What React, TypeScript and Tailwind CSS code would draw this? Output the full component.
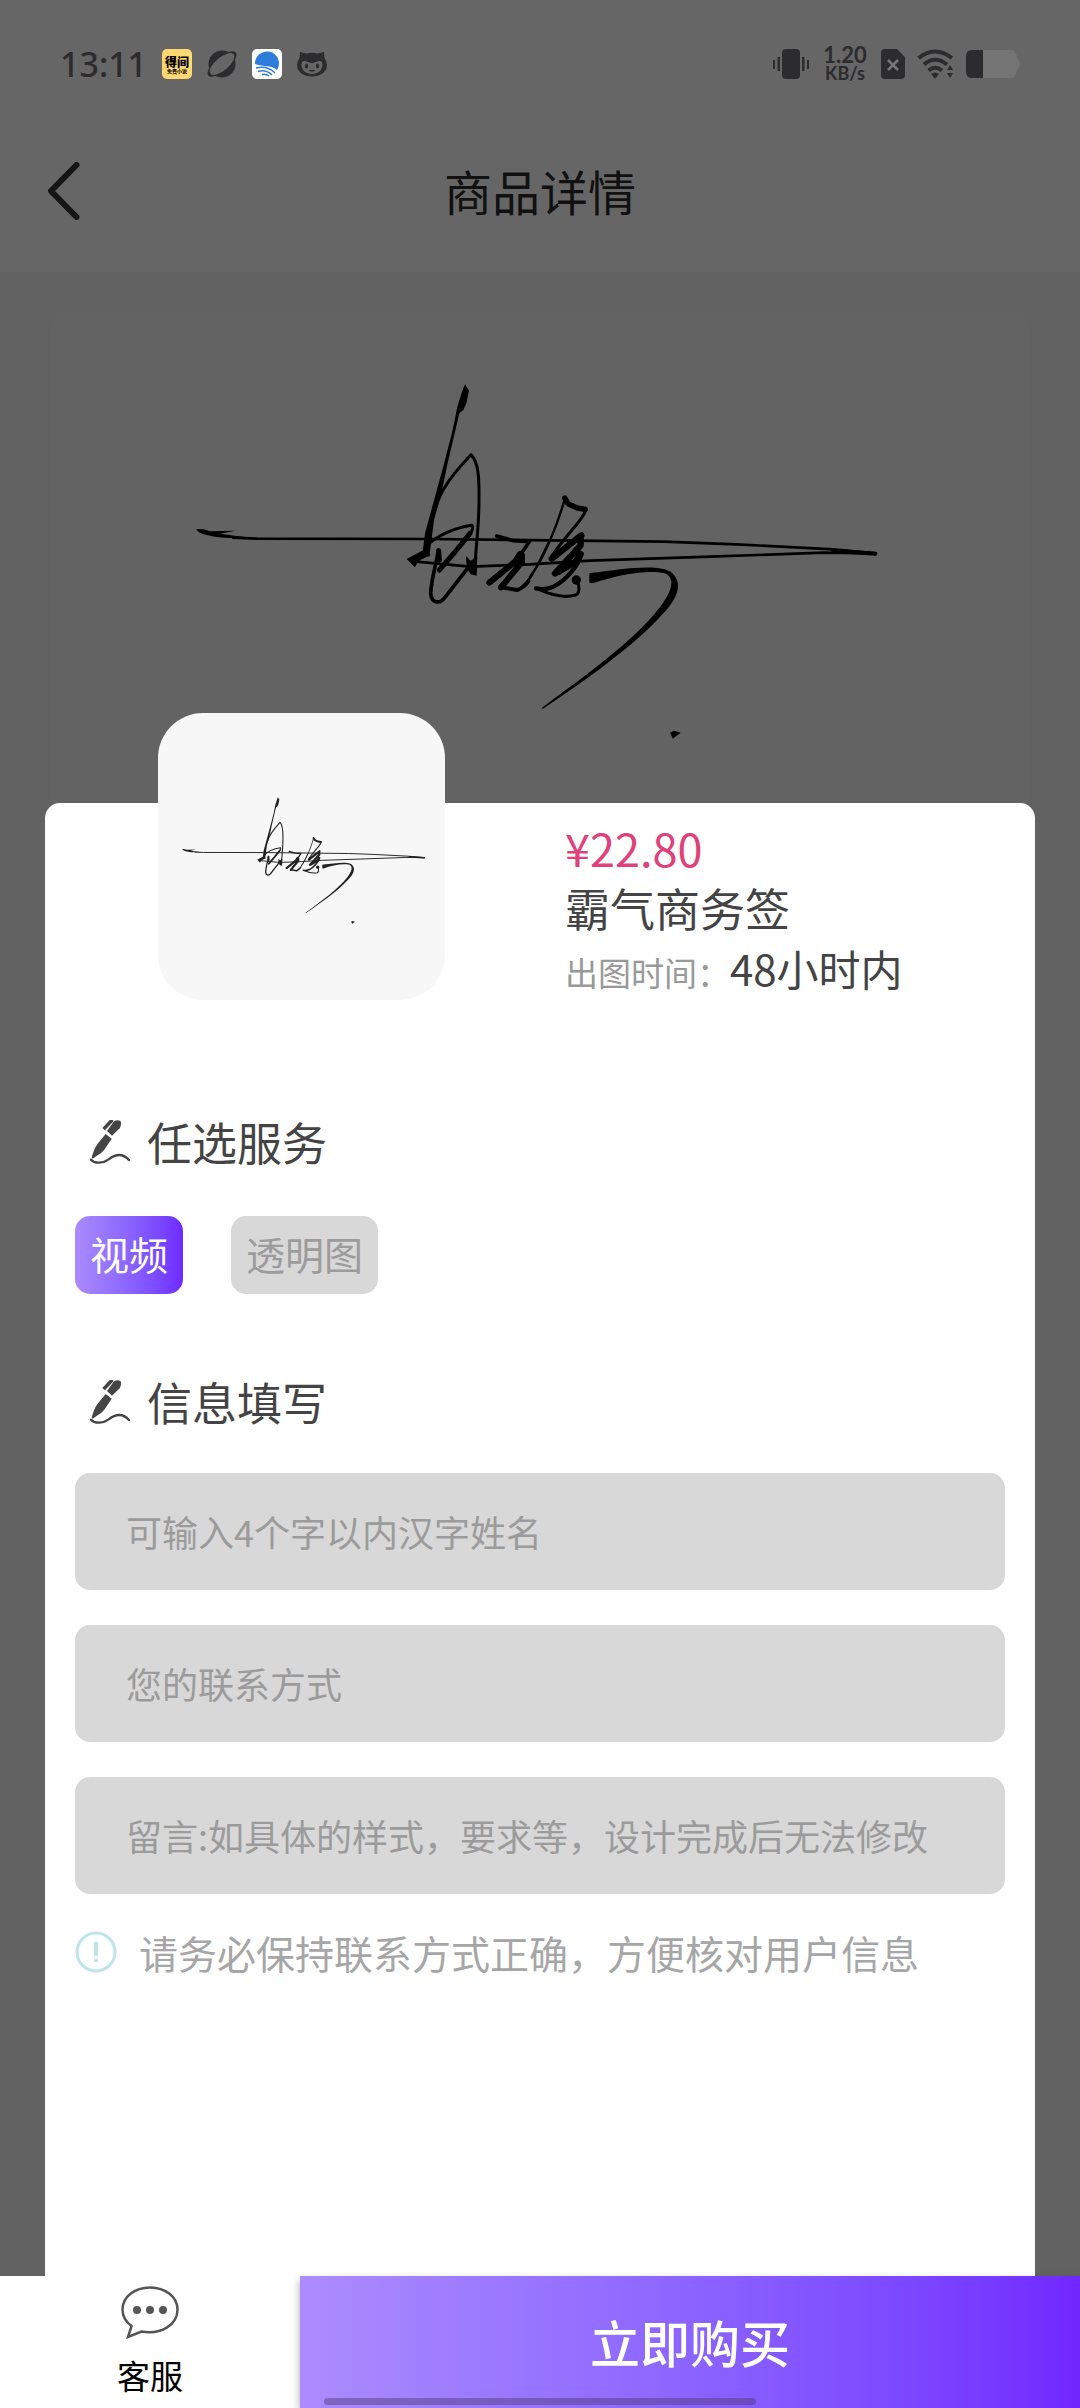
import { useState } from "react";

function Signature() {
  return (
    <g stroke="currentColor" fill="none" strokeLinecap="round" strokeLinejoin="round">
      <g fill="currentColor" stroke="none">
        <path d="M78 508Q95 504 120 514L196 512 150 521 245 534Q160 538 110 525 85 520 78 508Z" />
        <path d="M710 597L765 568 782 585 745 603 735 622Z" />
        <path d="M885 73L897 92 889 130 880 150 868 160 833 310 814 400 792 480 778 590 757 585 765 520 795 410 825 300 848 210 862 140 876 95Z" />
        <path d="M888 588L902 602 922 588 920 647 902 643 890 625Z" />
        <path d="M1268 638C1350 628 1460 610 1502 635 1542 666 1524 715 1478 762 1398 852 1260 952 1118 1047L1116 1043C1250 945 1390 843 1465 748 1512 690 1514 653 1485 640 1430 627 1340 645 1268 670L1258 668V640Z" />
        <path d="M1500 1118L1512 1112 1532 1118 1515 1131 1509 1136Z" />
        <circle cx="1219" cy="660" r="14" />
      </g>
      <path strokeWidth="8" d="M190 533L260 536 780 537 1140 541 1480 545 1700 553 1990 568 2118 580 1960 578 1620 590 1260 602 1080 613 900 620 740 605" />
      <path strokeWidth="12" d="M1990 572L2116 581" />
      <path strokeWidth="9" d="M795 450C810 390 850 340 903 284 930 310 927 380 927 420 927 500 918 560 914 625" />
      <path strokeWidth="9" d="M765 562C800 525 860 502 906 496 914 505 900 530 860 570L808 632" />
      <path strokeWidth="15" d="M900 520L855 576 808 630M806 572L808 600" />
      <path strokeWidth="11" d="M805 570C800 610 785 650 782 700 785 732 810 732 825 712L895 622" />
      <path strokeWidth="11" d="M980 528L1030 542 1078 545 1046 592" />
      <path strokeWidth="18" d="M1050 582L1035 605 958 668M1056 586V606L993 682" />
      <path strokeWidth="12" d="M993 682L1042 690Q1060 684 1075 664" />
      <path strokeWidth="7" d="M1042 690C1075 670 1090 640 1110 600L1140 540M1080 650C1120 600 1160 500 1182 425" />
      <path strokeWidth="16" d="M1184 414L1195 432 1222 444 1246 448" />
      <path strokeWidth="9" d="M1248 450C1235 485 1200 510 1144 590" />
      <path strokeWidth="19" d="M1234 526L1145 596M1232 530V556L1155 640M1232 582L1215 606 1165 636" />
      <path strokeWidth="13" d="M1234 582C1230 610 1190 660 1150 680 1130 688 1110 688 1098 685" />
      <path strokeWidth="9" d="M1110 690C1150 708 1190 712 1215 706 1232 700 1228 680 1222 662" />
    </g>
  );
}

function PenIcon() {
  return (
    <svg viewBox="150 120 120 132" className="h-11 w-10 shrink-0" fill="currentColor" aria-hidden="true">
      <path d="M222 124Q232 118 242 124 245 136 239 145L216 167 201 153Z" />
      <path d="M209 120H218L221 123 195 151 187 144Z" />
      <path d="M197 162L215 176 193 209Q184 220 175 224L158 236 155 233C159 216 164 203 173 191Z" />
      <path d="M153 239C165 252 190 250 206 238 228 221 248 219 267 240" fill="none" stroke="currentColor" strokeWidth="7" strokeLinecap="round" />
    </svg>
  );
}

function StatusBar() {
  return (
    <div className="flex h-32 items-center justify-between pl-[60px] pr-[60px] text-[#2c2c2e]">
      <div className="flex items-center gap-[15px]">
        <span className="w-[87px] font-['Noto_Sans',sans-serif] text-[34px] font-medium leading-[36px]">13:11</span>
        <div className="flex size-[30px] flex-col items-center justify-center rounded-[5px] bg-[#ffd872] text-black">
          <span className="text-[12px] font-black leading-[13px]">得间</span>
          <span className="text-[5px] font-bold leading-[6px]">免费小说</span>
        </div>
        <svg viewBox="0 0 30 30" className="size-[30px]" aria-hidden="true">
          <circle cx="15" cy="15" r="13.5" fill="currentColor" />
          <ellipse cx="15" cy="15" rx="18" ry="7" transform="rotate(-40 15 15)" fill="currentColor" />
          <ellipse cx="15" cy="15" rx="15" ry="6.5" transform="rotate(-40 15 15)" fill="#666" />
        </svg>
        <svg viewBox="0 0 30 30" className="size-[30px]" aria-hidden="true">
          <rect width="30" height="30" rx="5" fill="#fff" />
          <path d="M3 15A12 12 0 1 1 25 21C20 16 12 18 3 15Z" fill="#2f7ddb" />
          <path d="M4 19C12 17 18 19 23 24M6 22.500C12 20.500 16 22 20 26M10 25.500C13 24.500 15 25.500 17 27" fill="none" stroke="#2f7ddb" strokeWidth="1.500" />
        </svg>
        <svg viewBox="0 0 30 30" className="size-[30px]" aria-hidden="true">
          <path fill="currentColor" fillRule="evenodd" d="M3 3L9 4.500Q15 3 21 4.500L27 3 27.500 9Q30 12 30 16C30 23 23 27.500 15 27.500S0 23 0 16Q0 12 2.500 9ZM5 13C3 20 8 25 15 25S27 20 25 13C22 10 19 14 15 14S8 10 5 13Z" />
          <ellipse cx="9.500" cy="17" rx="1.600" ry="2.600" fill="currentColor" />
          <ellipse cx="20.500" cy="17" rx="1.600" ry="2.600" fill="currentColor" />
          <path d="M12.500 21Q15 23 17.500 21" stroke="currentColor" strokeWidth="1.500" fill="none" />
        </svg>
      </div>
      <div className="flex items-center gap-3">
        <svg viewBox="0 0 36 30" className="h-[30px] w-9" fill="currentColor" aria-hidden="true">
          <rect x="9" width="18" height="30" rx="4" />
          <path d="M0 11H2V20H0ZM4.500 8H7V22H4.500ZM29 8H31.500V22H29ZM34 11H36V20H34Z" />
        </svg>
        <p className="flex w-12 flex-col items-center font-['Lato',sans-serif] font-bold leading-[19px]">
          <span className="text-[22px]">1.20</span>
          <span className="text-[18px]">KB/s</span>
        </p>
        <svg viewBox="0 0 24 30" className="h-[30px] w-6" aria-hidden="true">
          <path d="M4 0H16L24 8V26Q24 30 20 30H4Q0 30 0 26V4Q0 0 4 0Z" fill="currentColor" />
          <path d="M7 11L17 21M17 11L7 21" stroke="#777" strokeWidth="2.500" />
        </svg>
        <svg viewBox="0 0 37 30" className="h-[30px] w-[37px]" aria-hidden="true">
          <g fill="none" stroke="currentColor" strokeWidth="4">
            <path d="M1.500 9Q18 -4 35 9M7 15.500Q18 6 30 15.500M11.500 21.500Q18 16 25 21.500" />
          </g>
          <path d="M14 25Q18 22 22 25L18 30ZM30 21L33 16 36 21ZM30 24H36L33 29Z" fill="currentColor" />
        </svg>
        <svg viewBox="0 0 54 28" className="h-7 w-[54px]" aria-hidden="true">
          <path d="M6 0H44Q50 0 51 8Q54 11 54 14T51 20Q50 28 44 28H6Q0 28 0 22V6Q0 0 6 0Z" fill="#757575" />
          <path d="M6 0H17V28H6Q0 28 0 22V6Q0 0 6 0Z" fill="currentColor" />
        </svg>
      </div>
    </div>
  );
}

function SectionTitle({ children }: { children: string }) {
  return (
    <h2 className="flex items-center gap-[17px] pl-[15px] text-[45px] leading-[60px] text-[#444]">
      <PenIcon />
      {children}
    </h2>
  );
}

const services = ["视频", "透明图"];
const fields = ["可输入4个字以内汉字姓名", "您的联系方式", "留言:如具体的样式，要求等，设计完成后无法修改"];

export default function App() {
  const [selected, setSelected] = useState("视频");
  return (
    <div lang="zh-CN" className="flex min-h-screen flex-col bg-[#626262] font-['Noto_Sans_CJK_SC',sans-serif]">
      <header className="bg-[#666]">
        <StatusBar />
        <div className="grid h-36 grid-cols-[1fr_auto_1fr] items-start px-12 pt-[34px]">
          <button aria-label="返回" className="w-8">
            <svg viewBox="0 0 32 58" className="h-[58px] w-8" fill="none" stroke="#151515" strokeWidth="6" strokeLinecap="round" strokeLinejoin="round">
              <path d="M28.500 3L3 29 28.500 55" />
            </svg>
          </button>
          <h1 className="text-[48px] leading-[56px] text-[#111]">商品详情</h1>
        </div>
      </header>

      <div className="mx-[50px] mt-[39px] rounded-t-[15px] bg-[#636363] text-black">
        <svg viewBox="-360 -147 2940 1476" className="w-full" role="img" aria-label="签名">
          <Signature />
        </svg>
      </div>

      <main className="mx-[45px] flex-1 rounded-t-[15px] bg-white px-[30px]">
        <section className="flex items-start gap-[120px] pl-[83px]">
          <div className="-mt-[90px] size-[287px] shrink-0 rounded-[45px] bg-[#f7f7f7] text-[#222]">
            <svg viewBox="-123 -636 2412 2412" className="size-full" role="img" aria-label="签名">
              <Signature />
            </svg>
          </div>
          <div className="pt-[15px] text-[#444]">
            <p className="text-[45px] leading-[60px] text-[#e0417b]">¥22.80</p>
            <p className="text-[45px] leading-[60px]">霸气商务签</p>
            <p className="flex items-baseline text-[42px] leading-[60px]">
              <span className="text-[33px] text-[#999]">出图时间：</span>48小时内
            </p>
          </div>
        </section>

        <section className="pt-[110px]">
          <SectionTitle>任选服务</SectionTitle>
          <div className="flex gap-12 pt-11">
            {services.map((name) => (
              <button
                key={name}
                aria-pressed={selected === name}
                onClick={() => setSelected(name)}
                className={
                  selected === name
                    ? "h-[78px] rounded-[15px] bg-linear-to-r from-[#ab8bfc] to-[#6f28ff] px-[15px] pb-1 text-[39px] leading-[60px] text-white"
                    : "h-[78px] rounded-[15px] bg-[#d8d8d8] px-[15px] pb-1 text-[39px] leading-[60px] text-[#9c9c9c]"
                }
              >
                {name}
              </button>
            ))}
          </div>
        </section>

        <section className="pt-[78px]">
          <SectionTitle>信息填写</SectionTitle>
          <div className="flex flex-col gap-[35px] pt-[41px]">
            {fields.map((hint) => (
              <input
                key={hint}
                aria-label={hint}
                placeholder={hint}
                className="h-[117px] w-full rounded-[15px] bg-[#d8d8d8] px-[51px] pb-0.5 text-[36px] text-[#444] outline-none placeholder:text-[#9b9b9b]"
              />
            ))}
          </div>
          <p className="flex items-center gap-[22px] pt-7 text-[39px] leading-[60px] text-[#a6a6a6]">
            <svg viewBox="0 0 42 42" className="size-[42px] shrink-0" fill="none" stroke="#bde5ea" strokeWidth="3" aria-hidden="true">
              <circle cx="21" cy="21" r="19" />
              <path d="M21 11V25M21 28V31" strokeWidth="4" />
            </svg>
            请务必保持联系方式正确，方便核对用户信息
          </p>
        </section>
      </main>

      <footer className="relative flex h-[132px] bg-white">
        <button className="flex w-[300px] flex-col items-center pt-2.5 text-[33px] leading-[48px] text-black">
          <svg viewBox="0 0 58 53" className="mb-3 h-[53px] w-[58px]" fill="none" stroke="#555" strokeWidth="2.500" aria-hidden="true">
            <path d="M10.500 40L7 51 20.500 45.500C40 49 56.500 39 56.500 23.500 56.500 11 44.500 1.500 29 1.500S1.500 11 1.500 23.500C1.500 30 5 36 10.500 40Z" />
            <g fill="#555" stroke="none">
              <circle cx="16" cy="24" r="4" />
              <circle cx="29" cy="24" r="4" />
              <circle cx="42" cy="24" r="4" />
            </g>
          </svg>
          客服
        </button>
        <button className="flex-1 bg-linear-to-r from-[#ac8cfd] to-[#7127ff] pb-0.5 text-[50px] font-medium text-white shadow-[0_4px_8px_rgba(0,0,0,0.35)]">
          立即购买
        </button>
        <div className="absolute inset-x-[30%] bottom-[3px] h-[7px] rounded-full bg-[#4a3a70]/45" />
      </footer>
    </div>
  );
}
